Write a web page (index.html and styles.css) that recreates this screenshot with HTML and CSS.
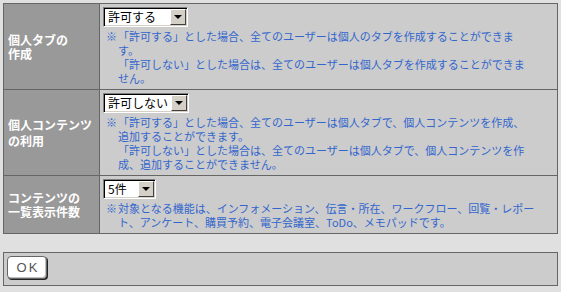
FILE: index.html
```html
<!DOCTYPE html>
<html lang="ja">
<head>
    <meta charset="UTF-8">
    <title>個人設定</title>
    <link rel="stylesheet" href="styles.css">
</head>
<body>

    <table class="settings">
        <tr>
            <th>個人タブの<br>作成</th>
            <td>
                <span class="select select-wide">
                    <select><option>許可する</option><option>許可しない</option></select>
                    <span class="select-btn"></span>
                </span>
                <div class="note">
                    <span class="mark">※</span>
                    <div class="note-body">「許可する」とした場合、全てのユーザーは個人のタブを作成することができま<br>す。<br>「許可しない」とした場合は、全てのユーザーは個人タブを作成することができま<br>せん。</div>
                </div>
            </td>
        </tr>
        <tr>
            <th class="spaced">個人コンテンツ<br>の利用</th>
            <td>
                <span class="select select-wider">
                    <select><option>許可しない</option><option>許可する</option></select>
                    <span class="select-btn"></span>
                </span>
                <div class="note">
                    <span class="mark">※</span>
                    <div class="note-body">「許可する」とした場合、全てのユーザーは個人タブで、個人コンテンツを作成、<br>追加することができます。<br>「許可しない」とした場合は、全てのユーザーは個人タブで、個人コンテンツを作<br>成、追加することができません。</div>
                </div>
            </td>
        </tr>
        <tr>
            <th>コンテンツの<br>一覧表示件数</th>
            <td>
                <span class="select select-narrow">
                    <select><option>5件</option><option>10件</option><option>20件</option></select>
                    <span class="select-btn"></span>
                </span>
                <div class="note">
                    <span class="mark">※</span>
                    <div class="note-body">対象となる機能は、インフォメーション、伝言・所在、ワークフロー、回覧・レポー<br>ト、アンケート、購買予約、電子会議室、ToDo、メモパッドです。</div>
                </div>
            </td>
        </tr>
    </table>

    <div class="actions">
        <button type="submit" class="ok-btn">OK</button>
    </div>

</body>
</html>
```

FILE: styles.css
```css
:root {
    --page: #e0e0e0;
    --label-bg: #999999;
    --cell-bg: #cccccc;
    --border: #666666;
    --note: #3366cc;
}

body {
    margin: 3px;
    background-color: var(--page);
    font-family: "Noto Sans CJK JP", sans-serif;
    font-size: 12px;
}

.settings {
    width: 555px;
    border-collapse: collapse;
    border: 1px solid var(--border);
}

.settings th,
.settings td {
    border: 1px solid var(--border);
}

.settings th {
    width: 87px;
    padding: 0 4px;
    background-color: var(--label-bg);
    color: #ffffff;
    font-weight: bold;
    font-size: 12px;
    line-height: 14px;
    text-align: left;
    vertical-align: middle;
}

.settings th.spaced {
    line-height: 16px;
}

.settings td {
    padding: 3px 3px 4px 3px;
    background-color: var(--cell-bg);
    vertical-align: top;
}

/* fake classic windows dropdown */
.select {
    display: inline-block;
    position: relative;
    height: 20px;
    box-sizing: border-box;
    border: 1px solid;
    border-color: #808080 #ffffff #ffffff #808080;
    box-shadow: inset 1px 1px 0 #000000, inset -1px -1px 0 #d4d0c8;
    background: #ffffff;
    vertical-align: top;
}

.select-wide { width: 85px; }
.select-wider { width: 86px; }
.select-narrow { width: 53px; }

.select select {
    appearance: none;
    -webkit-appearance: none;
    display: block;
    width: 100%;
    height: 100%;
    margin: 0;
    padding: 0 0 0 4px;
    border: 0;
    background: transparent;
    color: #000000;
    font-family: "Noto Sans CJK JP", sans-serif;
    font-size: 12px;
    line-height: 18px;
}

.select-btn {
    position: absolute;
    top: 1px;
    right: 1px;
    width: 16px;
    height: 16px;
    box-sizing: border-box;
    background-color: #d4d0c8;
    border: 1px solid;
    border-color: #ffffff #404040 #404040 #ffffff;
    pointer-events: none;
}

.select-btn::after {
    content: "";
    position: absolute;
    left: 3px;
    top: 5px;
    border-left: 4px solid transparent;
    border-right: 4px solid transparent;
    border-top: 4px solid #000000;
}

.note {
    display: flex;
    margin-top: 2px;
    color: var(--note);
    font-size: 11px;
    line-height: 14px;
    white-space: nowrap;
}

.mark {
    width: 15px;
    padding-left: 3px;
    box-sizing: border-box;
    flex-shrink: 0;
}

.actions {
    margin-top: 18px;
    padding: 3px 3px 6px 3px;
    border: 1px solid var(--border);
    background-color: var(--cell-bg);
    width: 547px;
}

.ok-btn {
    display: block;
    width: 40px;
    height: 23px;
    padding: 0;
    background-color: #ffffff;
    border: 1px solid #666666;
    border-radius: 4px;
    box-shadow: inset -1px -1px 0 #c0c0c0, 1px 1px 0 #222222;
    color: #555555;
    font-family: "Liberation Sans", sans-serif;
    font-size: 13px;
    letter-spacing: 2px;
    text-indent: 2px;
}
```
